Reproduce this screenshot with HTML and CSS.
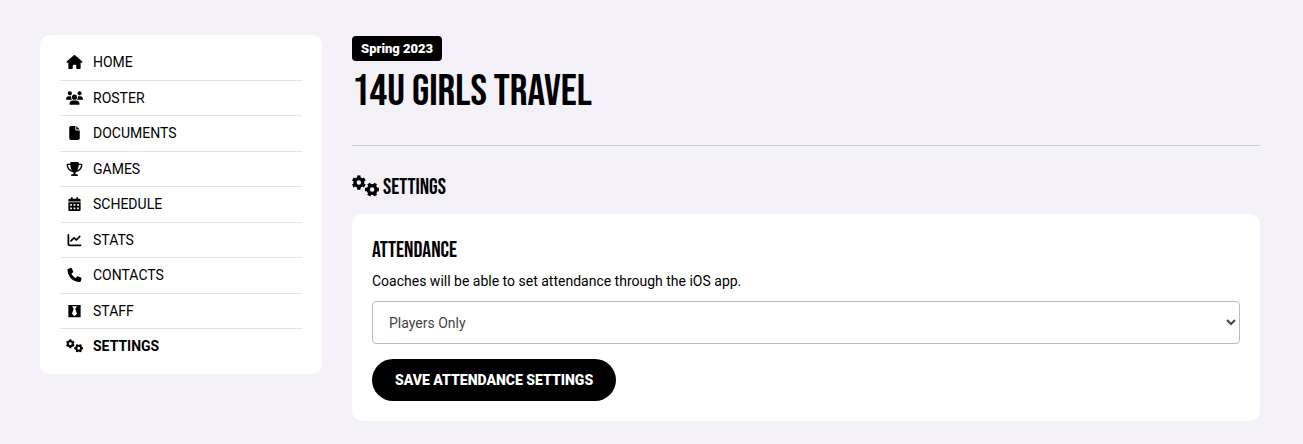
FILE: index.html
```html
<!DOCTYPE html>
<html lang="en">
<head>
    <meta charset="UTF-8">
    <meta name="viewport" content="width=device-width, initial-scale=1.0">
    <title>14U Girls Travel - Settings</title>
    <link rel="stylesheet" href="styles.css">
</head>
<body>

    <!-- Shared gears icon -->
    <svg class="sprite" aria-hidden="true">
        <symbol id="gears" viewBox="0 0 640 512">
            <g fill="none" stroke="currentColor">
                <circle cx="162" cy="172" r="92" stroke-width="78"/>
                <path stroke-width="80" d="M162 82V2M162 262V342M240 127L305 90M240 217L305 254M84 127L19 90M84 217L19 254"/>
                <circle cx="478" cy="340" r="92" stroke-width="78"/>
                <path stroke-width="80" d="M388 340H308M568 340H648M433 262L396 197M523 262L560 197M433 418L396 483M523 418L560 483"/>
            </g>
        </symbol>
    </svg>

    <div class="container">
        <!-- Team Menu -->
        <nav class="sidebar">
            <ul class="menu">
                <li><a href="#"><svg class="icon" viewBox="0 0 576 512"><path d="M575.8 255.5c0 18-15 32.1-32 32.1h-32l.7 160.2c0 2.7-.2 5.4-.5 8.1V472c0 22.1-17.9 40-40 40H392c-22.1 0-40-17.9-40-40V384c0-17.7-14.3-32-32-32H256c-17.7 0-32 14.3-32 32v88c0 22.1-17.9 40-40 40H104c-22.1 0-40-17.9-40-40V287.6H32c-18 0-32-14-32-32.1c0-9 3-17 10-24L266.4 8c7-7 15-8 22-8s15 2 21 7L564.8 231.5c8 7 12 15 11 24z"/></svg>HOME</a></li>
                <li><a href="#"><svg class="icon" viewBox="0 0 640 512"><path d="M144 0a80 80 0 1 1 0 160A80 80 0 1 1 144 0zM512 0a80 80 0 1 1 0 160A80 80 0 1 1 512 0zM0 298.7C0 239.8 47.8 192 106.7 192h42.7c15.9 0 31 3.5 44.6 9.7c-1.3 7.2-1.9 14.7-1.9 22.3c0 38.2 16.8 72.5 43.3 96H21.3C9.6 320 0 310.4 0 298.7zM405.3 320c26.6-23.5 43.3-57.8 43.3-96c0-7.6-.7-15-1.9-22.3c13.6-6.3 28.7-9.7 44.6-9.7h42.7C592.2 192 640 239.8 640 298.7c0 11.8-9.6 21.3-21.3 21.3H405.3zM224 224a96 96 0 1 1 192 0 96 96 0 1 1 -192 0zM128 485.3C128 411.7 187.7 352 261.3 352H378.7C452.3 352 512 411.7 512 485.3c0 14.7-11.9 26.7-26.7 26.7H154.7c-14.7 0-26.7-11.9-26.7-26.7z"/></svg>ROSTER</a></li>
                <li><a href="#"><svg class="icon" viewBox="0 0 384 512"><path d="M0 64C0 28.7 28.7 0 64 0H224V128c0 17.7 14.3 32 32 32H384V448c0 35.3-28.7 64-64 64H64c-35.3 0-64-28.7-64-64V64zm384 64H256V0L384 128z"/></svg>DOCUMENTS</a></li>
                <li><a href="#"><svg class="icon" viewBox="0 0 576 512"><path d="M400 0H176c-26.5 0-48.1 21.8-47.1 48.2c.2 5.3 .4 10.6 .7 15.8H24C10.7 64 0 74.7 0 88c0 92.6 33.5 157 78.5 200.7c44.3 43.1 98.3 64.8 138.1 75.8c23.4 6.5 39.4 26 39.4 45.6c0 20.9-17 37.9-37.9 37.9H192c-17.7 0-32 14.3-32 32s14.3 32 32 32H384c17.7 0 32-14.3 32-32s-14.3-32-32-32H357.9C337 448 320 431 320 410.1c0-19.6 15.9-39.2 39.4-45.6c39.9-11 93.9-32.7 138.2-75.8C542.5 245 576 180.6 576 88c0-13.3-10.7-24-24-24H446.4c.3-5.2 .5-10.4 .7-15.8C448.1 21.8 426.5 0 400 0zM48.9 112h84.4c9.1 90.1 29.2 150.3 51.9 190.6c-24.9-11-50.8-26.5-73.2-48.3c-32-31.1-58-76-63-142.3zM464.1 254.3c-22.4 21.8-48.3 37.3-73.2 48.3c22.7-40.3 42.8-100.5 51.9-190.6h84.4c-5.1 66.3-31.1 111.2-63 142.3z"/></svg>GAMES</a></li>
                <li><a href="#"><svg class="icon" viewBox="0 0 448 512"><path fill-rule="evenodd" d="M128 0c17.7 0 32 14.3 32 32V64H288V32c0-17.7 14.3-32 32-32s32 14.3 32 32V64h48c26.5 0 48 21.5 48 48v48H0V112C0 85.5 21.5 64 48 64H96V32c0-17.7 14.3-32 32-32zM0 192H448V464c0 26.5-21.5 48-48 48H48c-26.5 0-48-21.5-48-48V192zM64 256v64h64v-64zM192 256v64h64v-64zM320 256v64h64v-64zM64 384v64h64v-64zM192 384v64h64v-64zM320 384v64h64v-64z"/></svg>SCHEDULE</a></li>
                <li><a href="#"><svg class="icon" viewBox="0 0 512 512"><path d="M64 64c0-17.7-14.3-32-32-32S0 46.3 0 64V400c0 44.2 35.8 80 80 80H480c17.7 0 32-14.3 32-32s-14.3-32-32-32H80c-8.8 0-16-7.2-16-16V64zm406.6 86.6c12.5-12.5 12.5-32.8 0-45.3s-32.8-12.5-45.3 0L320 210.7l-57.4-57.4c-12.5-12.5-32.8-12.5-45.3 0l-112 112c-12.5 12.5-12.5 32.8 0 45.3s32.8 12.5 45.3 0L240 221.3l57.4 57.4c12.5 12.5 32.8 12.5 45.3 0l128-128z"/></svg>STATS</a></li>
                <li><a href="#"><svg class="icon" viewBox="0 0 512 512"><path d="M164.9 24.6c-7.7-18.6-28-28.5-47.4-23.2l-88 24C12.1 30.2 0 46 0 64C0 311.4 200.6 512 448 512c18 0 33.8-12.1 38.6-29.5l24-88c5.3-19.4-4.6-39.7-23.2-47.4l-96-40c-16.3-6.8-35.2-2.1-46.3 11.6L304.7 368C234.3 334.7 177.3 277.7 144 207.3L193.3 167c13.7-11.2 18.4-30 11.6-46.3l-40-96z"/></svg>CONTACTS</a></li>
                <li><a href="#"><svg class="icon" viewBox="0 0 448 512"><path fill-rule="evenodd" d="M0 32v448h448V32H0zm316.5 325.2L224 445.9l-92.5-88.7 64.5-184-64.5-86.6h184.9L252 173.2l64.5 184z"/></svg>STAFF</a></li>
                <li class="active"><a href="#"><svg class="icon" viewBox="0 0 640 512"><use href="#gears"/></svg>SETTINGS</a></li>
            </ul>
        </nav>

        <!-- Main Section -->
        <main class="content">
            <header class="team-header">
                <span class="badge">Spring 2023</span>
                <h1>14U GIRLS TRAVEL</h1>
            </header>

            <h2><svg class="heading-icon" viewBox="0 0 640 512"><use href="#gears"/></svg>SETTINGS</h2>

            <form class="card">
                <h3>ATTENDANCE</h3>
                <label for="attendance">Coaches will be able to set attendance through the iOS app.</label>
                <select id="attendance" class="form-control">
                    <option selected>Players Only</option>
                </select>
                <button type="button" class="btn">SAVE ATTENDANCE SETTINGS</button>
            </form>
        </main>
    </div>

</body>
</html>
```
FILE: styles.css
```css
* {
    box-sizing: border-box;
}

body {
    font-family: Roboto, Arial, sans-serif;
    font-size: 14px;
    line-height: 20px;
    background-color: #f4f1f9;
    margin: 0;
    color: #000;
}

.sprite {
    display: none;
}

.container {
    display: grid;
    grid-template-columns: 282px 1fr;
    gap: 30px;
    align-items: start;
    padding: 35px 43px 23px 40px;
}

.sidebar, .card {
    background-color: #fff;
    border-radius: 10px;
}

/* Team menu */
.sidebar {
    padding: 10px 20px;
}

.menu {
    list-style: none;
    margin: 0;
    padding: 0;
}

.menu li {
    border-bottom: 1px solid #e4e4e8;
}

.menu li:nth-child(odd) {
    padding-bottom: 1px;
}

.menu li:last-child {
    border-bottom: none;
}

.menu a {
    display: flex;
    align-items: center;
    gap: 9px;
    padding: 7px 0 7px 6px;
    color: #000;
    text-decoration: none;
}

.menu .active {
    font-weight: bold;
}

.icon {
    width: 17px;
    height: 14px;
    margin-right: 1px;
    fill: currentColor;
}

/* Headings */
h1, h2, h3 {
    font-family: "Bebas Neue", "Liberation Sans Narrow", sans-serif;
    font-weight: normal;
    margin: 0;
}

.team-header {
    padding-top: 1px;
    padding-bottom: 28px;
    border-bottom: 1px solid #c6cdd8;
}

.badge {
    display: block;
    width: fit-content;
    padding: 0 9px;
    border-radius: 4px;
    background-color: #000;
    color: #fff;
    font-size: 13px;
    font-weight: 900;
    line-height: 25px;
}

h1 {
    padding-top: 6px;
    font-size: 44px;
    line-height: 50px;
}

h2 {
    display: flex;
    align-items: flex-start;
    gap: 4px;
    margin: 29px 0 13px;
    font-size: 22px;
    line-height: 26px;
}

.heading-icon {
    width: 27px;
    height: 22px;
}

/* Attendance form */
.card {
    padding: 24px 20px 20px;
}

h3 {
    margin-bottom: 7px;
    font-size: 22px;
    line-height: 26px;
}

label {
    display: block;
    margin-bottom: 10px;
}

.form-control {
    display: block;
    width: 100%;
    height: 43px;
    margin-bottom: 15px;
    padding: 0 0 0 12px;
    border: 1px solid #bbb;
    border-radius: 4px;
    background-color: #fff;
    color: #444;
    font-family: inherit;
    font-size: 14px;
}

.btn {
    display: block;
    height: 42px;
    padding: 0 23px;
    border: none;
    border-radius: 21px;
    background-color: #000;
    color: #fff;
    font-family: inherit;
    font-size: 14px;
    font-weight: 900;
    cursor: pointer;
}
```
